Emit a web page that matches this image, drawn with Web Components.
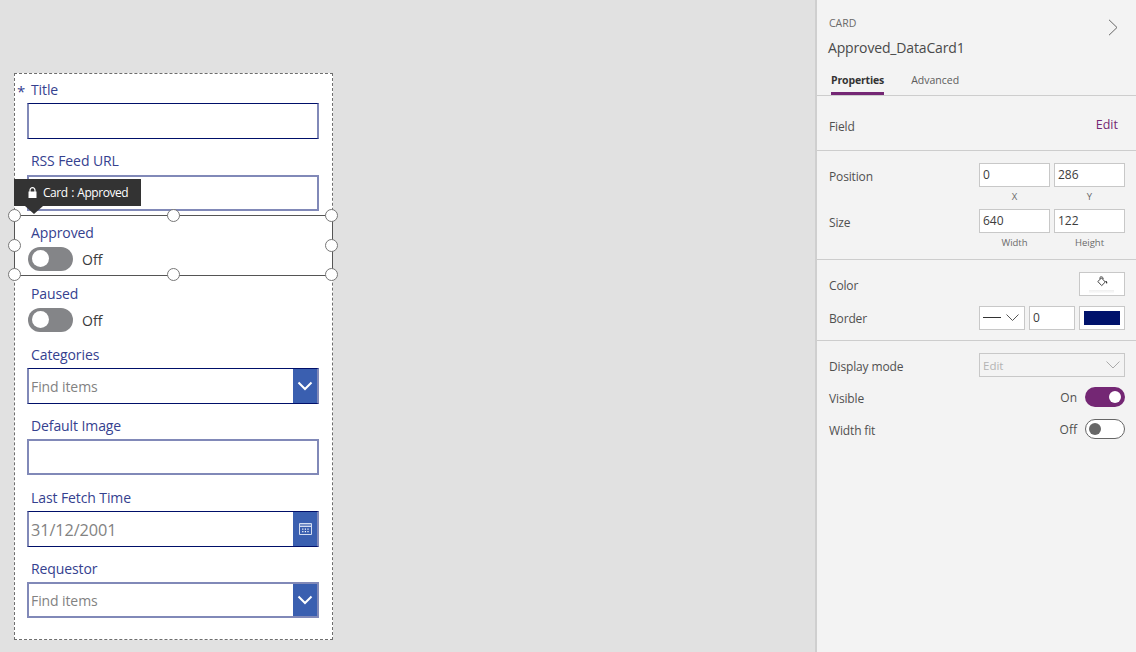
<!DOCTYPE html>
<html>
<head>
<meta charset="utf-8">
<title>Approved_DataCard1</title>
<style>
  html, body { margin: 0; height: 100%; overflow: hidden; }
  body { font-family: "Open Sans", "Noto Sans", sans-serif; background: #e1e1e1; }
</style>
</head>
<body>
<studio-shell>
  <form-canvas slot="canvas">
    <data-card label="Title" required>
      <field-box active></field-box>
    </data-card>
    <data-card label="RSS Feed URL">
      <field-box></field-box>
    </data-card>
    <data-card label="Approved" compact selected>
      <toggle-field></toggle-field>
    </data-card>
    <data-card label="Paused" compact>
      <toggle-field></toggle-field>
    </data-card>
    <data-card label="Categories">
      <field-box active placeholder="Find items" icon="chevron"></field-box>
    </data-card>
    <data-card label="Default Image">
      <field-box></field-box>
    </data-card>
    <data-card label="Last Fetch Time">
      <field-box active large placeholder="31/12/2001" icon="calendar"></field-box>
    </data-card>
    <data-card label="Requestor">
      <field-box placeholder="Find items" icon="chevron"></field-box>
    </data-card>
  </form-canvas>
  <props-panel slot="panel"></props-panel>
</studio-shell>

<script>
class StudioShell extends HTMLElement {
  constructor() {
    super();
    this.attachShadow({mode: 'open'}).innerHTML = `
      <style>
        :host { display: grid; grid-template-columns: 1fr 321px; width: 1136px; height: 652px; }
        .canvas { padding: 73px 0 0 14px; min-width: 0; }
      </style>
      <div class="canvas"><slot name="canvas"></slot></div>
      <slot name="panel"></slot>
    `;
  }
}

class FormCanvas extends HTMLElement {
  constructor() {
    super();
    this.attachShadow({mode: 'open'}).innerHTML = `
      <style>
        :host {
          display: block;
          box-sizing: border-box;
          width: 319px;
          height: 567px;
          background: #fff;
          border: 1px dashed #6e6e6e;
          overflow: visible;
        }
      </style>
      <slot></slot>
    `;
  }
}

class DataCard extends HTMLElement {
  constructor() {
    super();
    const compact = this.hasAttribute('compact');
    const selected = this.hasAttribute('selected');
    const handles = ['0,0', '50%,0', '100%,0', '0,50%', '100%,50%', '0,100%', '50%,100%', '100%,100%']
      .map(p => {
        const [l, t] = p.split(',');
        return `<i class="handle" style="left:${l};top:${t}"></i>`;
      }).join('');
    this.attachShadow({mode: 'open'}).innerHTML = `
      <style>
        :host {
          display: block;
          position: relative;
          box-sizing: border-box;
          height: ${compact ? 61 : 71.4}px;
          padding: 5px 13px 0 12px;
        }
        .label {
          display: block;
          height: 24.3px;
          line-height: 22px;
          padding-left: 4px;
          font-size: 14px;
          letter-spacing: -0.1px;
          color: #35418f;
        }
        .req {
          position: absolute;
          left: 2px;
          top: 7px;
          font-size: 15px;
          line-height: 20px;
          color: #35418f;
        }
        .frame {
          position: absolute;
          left: -1px;
          right: -1px;
          top: -1.5px;
          bottom: 1.8px;
          border: 1px solid #555;
          pointer-events: none;
        }
        .handle {
          position: absolute;
          box-sizing: border-box;
          width: 13px;
          height: 13px;
          margin: -7px 0 0 -7px;
          border-radius: 50%;
          border: 1px solid #777;
          background: #fff;
        }
        .tip {
          position: absolute;
          left: -1px;
          top: -37.8px;
          width: 127px;
          height: 27px;
          display: flex;
          align-items: center;
          gap: 6px;
          padding-left: 14px;
          box-sizing: border-box;
          background: #333;
          color: #fff;
          font-size: 12px;
          font-weight: 500;
          letter-spacing: -0.45px;
          word-spacing: 0.8px;
          white-space: nowrap;
        }
        .tip::after {
          content: "";
          position: absolute;
          left: 11px;
          top: 27px;
          border: 9px solid transparent;
          border-top: 8px solid #333;
          border-bottom: 0;
        }
      </style>
      ${this.hasAttribute('required') ? '<span class="req">*</span>' : ''}
      <span class="label">${this.getAttribute('label')}</span>
      <slot></slot>
      ${selected ? `<div class="frame">${handles}</div>
      <div class="tip">
        <svg width="9" height="11" viewBox="0 0 9 11"><path d="M2 5V3.2a2.5 2.5 0 0 1 5 0V5" fill="none" stroke="#fff" stroke-width="1.2"/><rect x="0.5" y="4.5" width="8" height="6.5" fill="#fff"/></svg>
        <span>Card : Approved</span>
      </div>` : ''}
    `;
  }
}

const FIELD_ICONS = {
  chevron: '<svg width="16" height="10" viewBox="0 0 16 10"><path d="M1.5 1.5 8 8l6.5-6.5" fill="none" stroke="#fff" stroke-width="2"/></svg>',
  calendar: '<svg width="13" height="12" viewBox="0 0 13 12"><path d="M1 1h11v2.5H1z" fill="#fff" fill-opacity=".3"/><path d="M.5.5h12v11H.5zM.5 3.5h12" fill="none" stroke="#d3ddf1"/><path d="M3.2 5.6h1.2v1.2H3.2zM5.8 5.6H7v1.2H5.8zM8.4 5.6h1.2v1.2H8.4zM3.2 8h1.2v1.2H3.2zM5.8 8H7v1.2H5.8zM8.4 8h1.2v1.2H8.4z" fill="#fff"/></svg>'
};

class FieldBox extends HTMLElement {
  constructor() {
    super();
    const active = this.hasAttribute('active');
    const text = this.getAttribute('placeholder');
    const icon = this.getAttribute('icon');
    const large = this.hasAttribute('large');
    this.attachShadow({mode: 'open'}).innerHTML = `
      <style>
        :host {
          display: flex;
          box-sizing: border-box;
          height: 36px;
          border: 2px solid #8189b8;
          ${active ? 'border-width: 1px 2px; border-top-color: #000f69; border-bottom-color: #000f69;' : ''}
          background: #fff;
          color: #828282;
          font-size: ${large ? 16.3 : 14}px;
          letter-spacing: -0.1px;
        }
        .text { flex: 1; padding-left: 2px; line-height: ${active ? 36 : 34}px; white-space: nowrap; }
        .btn {
          flex: none;
          width: 24px;
          display: flex;
          align-items: center;
          justify-content: center;
          background: #3a5fb0;
        }
      </style>
      <span class="text">${text || ''}</span>
      ${icon ? `<span class="btn">${FIELD_ICONS[icon]}</span>` : ''}
    `;
  }
}

class ToggleField extends HTMLElement {
  constructor() {
    super();
    this.attachShadow({mode: 'open'}).innerHTML = `
      <style>
        :host { display: flex; align-items: center; gap: 9px; height: 24px; padding: 1px 0 0 1px; color: #3a3a3a; font-size: 14px; }
        .track { width: 45px; height: 24px; border-radius: 12px; background: #848588; position: relative; }
        .track::after {
          content: ""; position: absolute; left: 4px; top: 3px;
          width: 17px; height: 17px; border-radius: 50%; background: #fff;
        }
        .state { padding-top: 1px; }
      </style>
      <span class="track"></span><span class="state">Off</span>
    `;
  }
}

class PropRow extends HTMLElement {
  constructor() {
    super();
    this.attachShadow({mode: 'open'}).innerHTML = `
      <style>
        :host { display: flex; align-items: flex-start; justify-content: space-between; }
        .name { font-size: 12px; line-height: 24px; padding-top: 1.5px; letter-spacing: -0.15px; color: #505050; white-space: nowrap; }
        .val { display: flex; gap: 4px; align-items: flex-start; }
      </style>
      <span class="name">${this.getAttribute('name')}</span>
      <span class="val"><slot></slot></span>
    `;
  }
}

class NumInput extends HTMLElement {
  constructor() {
    super();
    const cap = this.getAttribute('caption');
    this.attachShadow({mode: 'open'}).innerHTML = `
      <style>
        :host { display: block; width: ${this.getAttribute('w') || 71}px; }
        .box {
          box-sizing: border-box; height: 24px; border: 1px solid #c8c8c8; background: #fff;
          font-size: 12px; line-height: 22px; padding-left: 3px; color: #3c3c3c;
        }
        .cap { text-align: center; font-size: 9.5px; line-height: 14px; margin-top: 3px; color: #6a6a6a; }
      </style>
      <div class="box">${this.getAttribute('value')}</div>
      ${cap ? `<div class="cap">${cap}</div>` : ''}
    `;
  }
}

class SwitchField extends HTMLElement {
  constructor() {
    super();
    const on = this.hasAttribute('on');
    this.attachShadow({mode: 'open'}).innerHTML = `
      <style>
        :host { display: flex; align-items: center; height: 24px; gap: 8px; font-size: 12px; color: #505050; }
        .track {
          box-sizing: border-box; width: 40px; height: 20px; border-radius: 10px; position: relative;
          ${on ? 'background: #742774;' : 'background: #fff; border: 1px solid #666;'}
        }
        .track::after {
          content: ""; position: absolute; width: 12px; height: 12px; border-radius: 50%;
          ${on ? 'right: 4px; top: 4px; background: #fff;' : 'left: 3px; top: 3px; background: #666;'}
        }
      </style>
      <span>${on ? 'On' : 'Off'}</span><span class="track"></span>
    `;
  }
}

class PropsPanel extends HTMLElement {
  constructor() {
    super();
    this.attachShadow({mode: 'open'}).innerHTML = `
      <style>
        :host {
          display: block; box-sizing: border-box; height: 652px;
          background: #f3f3f3; border-left: 2px solid #cfcfcf;
          color: #505050;
        }
        .head { position: relative; height: 96px; box-sizing: border-box; border-bottom: 1px solid #cdcdcd; padding: 16px 0 0 11px; }
        .kind { font-size: 10.5px; line-height: 14px; color: #6a6a6a; padding-left: 1px; }
        .title { font-size: 14px; line-height: 20px; margin-top: 8px; letter-spacing: -0.15px; color: #4a4a4a; }
        .next { position: absolute; right: 18px; top: 19px; }
        .tabs { display: flex; gap: 27px; margin-top: 15px; padding-left: 3px; font-size: 10.5px; line-height: 14px; }
        .tab { color: #5c5c5c; }
        .tab.on { color: #333; font-weight: 700; letter-spacing: -0.15px; border-bottom: 3px solid #742774; height: 19px; }
        section { border-bottom: 1px solid #cdcdcd; box-sizing: border-box; padding: 0 11px 0 12px; }
        .field { height: 55px; padding-top: 17.5px; }
        .edit { font-size: 12.5px; line-height: 21px; color: #742774; padding-right: 7px; }
        .geom { height: 109px; padding-top: 12px; display: flex; flex-direction: column; gap: 3px; }
        .geom prop-row { height: 43px; }
        .app { height: 81px; padding-top: 12px; display: flex; flex-direction: column; gap: 8px; }
        .swatch {
          box-sizing: border-box; width: 46px; height: 24px; border: 1px solid #c8c8c8; background: #fff;
          display: flex; align-items: center; justify-content: center; position: relative;
        }
        .swatch i { width: 36px; height: 14px; background: #00126b; }
        .bucket::after {
          content: ""; position: absolute; left: 9px; right: 10px; bottom: 2px; height: 3px;
          background: linear-gradient(#eeeeee, #fbfbfb);
        }
        .dash {
          box-sizing: border-box; width: 46px; height: 24px; border: 1px solid #c8c8c8; background: #fff;
          display: flex; align-items: center; justify-content: space-between; padding: 0 5px 0 3px;
        }
        .dash b { width: 18px; height: 1px; background: #333; }
        .misc { padding-top: 12px; border: 0; display: flex; flex-direction: column; gap: 8px; }
        .misc prop-row { height: 24px; }
        .select {
          box-sizing: border-box; width: 146px; height: 24px; border: 1px solid #c8c8c8;
          display: flex; align-items: center; justify-content: space-between; padding: 0 4px 0 3px;
          font-size: 11.5px; color: #b4b4b4;
        }
      </style>
      <div class="head">
        <div class="kind">CARD</div>
        <div class="title">Approved_DataCard1</div>
        <svg class="next" width="10" height="17" viewBox="0 0 10 17"><path d="M1 .8 9 8.5 1 16.2" fill="none" stroke="#666" stroke-width="1"/></svg>
        <div class="tabs"><span class="tab on">Properties</span><span class="tab">Advanced</span></div>
      </div>
      <section class="field">
        <prop-row name="Field"><span class="edit">Edit</span></prop-row>
      </section>
      <section class="geom">
        <prop-row name="Position">
          <num-input value="0" caption="X"></num-input>
          <num-input value="286" caption="Y"></num-input>
        </prop-row>
        <prop-row name="Size">
          <num-input value="640" caption="Width"></num-input>
          <num-input value="122" caption="Height"></num-input>
        </prop-row>
      </section>
      <section class="app">
        <prop-row name="Color">
          <span class="swatch bucket">
            <svg width="11" height="11" viewBox="0 0 11 11" style="margin-top:-6px"><path d="M.8 5.5 4.5 2l3.8 4-3.6 3.6z" fill="#fff" stroke="#444"/><path d="M3 3V1.4C3 .6 5.6.6 5.8 1.6L6.2 3" fill="none" stroke="#444"/><path d="M8.3 5h1.2c.8 1 1 1.8.6 2.4-.6.4-1.2 0-1.2-.8z" fill="#333"/></svg>
          </span>
        </prop-row>
        <prop-row name="Border">
          <span class="dash"><b></b><svg width="13" height="7" viewBox="0 0 13 7"><path d="M.5.5 6.5 6.5 12.5.5" fill="none" stroke="#555"/></svg></span>
          <num-input value="0" w="46"></num-input>
          <span class="swatch"><i></i></span>
        </prop-row>
      </section>
      <section class="misc">
        <prop-row name="Display mode">
          <span class="select"><span>Edit</span><svg width="14" height="8" viewBox="0 0 14 8"><path d="M.5.5 7 7l6.5-6.5" fill="none" stroke="#aaa"/></svg></span>
        </prop-row>
        <prop-row name="Visible"><switch-field on></switch-field></prop-row>
        <prop-row name="Width fit"><switch-field></switch-field></prop-row>
      </section>
    `;
  }
}

customElements.define('studio-shell', StudioShell);
customElements.define('form-canvas', FormCanvas);
customElements.define('data-card', DataCard);
customElements.define('field-box', FieldBox);
customElements.define('toggle-field', ToggleField);
customElements.define('prop-row', PropRow);
customElements.define('num-input', NumInput);
customElements.define('switch-field', SwitchField);
customElements.define('props-panel', PropsPanel);
</script>
</body>
</html>
